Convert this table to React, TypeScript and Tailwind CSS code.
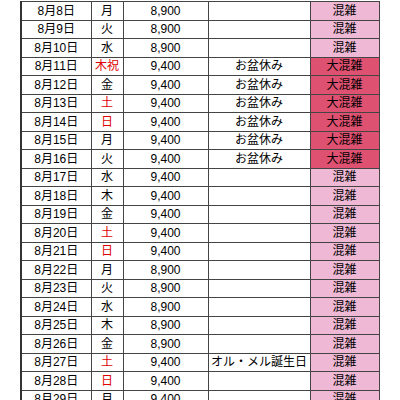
const rows: [string, string, boolean, string, string, "" | "mid" | "high"][] = [
  ["8月8日", "月", false, "8,900", "", "mid"],
  ["8月9日", "火", false, "8,900", "", "mid"],
  ["8月10日", "水", false, "8,900", "", "mid"],
  ["8月11日", "木祝", true, "9,400", "お盆休み", "high"],
  ["8月12日", "金", false, "9,400", "お盆休み", "high"],
  ["8月13日", "土", true, "9,400", "お盆休み", "high"],
  ["8月14日", "日", true, "9,400", "お盆休み", "high"],
  ["8月15日", "月", false, "9,400", "お盆休み", "high"],
  ["8月16日", "火", false, "9,400", "お盆休み", "high"],
  ["8月17日", "水", false, "9,400", "", "mid"],
  ["8月18日", "木", false, "9,400", "", "mid"],
  ["8月19日", "金", false, "9,400", "", "mid"],
  ["8月20日", "土", true, "9,400", "", "mid"],
  ["8月21日", "日", true, "9,400", "", "mid"],
  ["8月22日", "月", false, "8,900", "", "mid"],
  ["8月23日", "火", false, "8,900", "", "mid"],
  ["8月24日", "水", false, "8,900", "", "mid"],
  ["8月25日", "木", false, "8,900", "", "mid"],
  ["8月26日", "金", false, "8,900", "", "mid"],
  ["8月27日", "土", true, "9,400", "オル・メル誕生日", "mid"],
  ["8月28日", "日", true, "9,400", "", "mid"],
  ["8月29日", "月", false, "9,400", "", "mid"],
]

export default function App() {
  return (
    <div className="w-[400px] h-[400px] overflow-hidden bg-white pl-[20px] pt-[1px] font-['Liberation_Sans','Noto_Sans_CJK_JP',sans-serif] text-[12px] text-black">
      <table className="border-collapse table-fixed w-[358px] border-l-2 border-[#333]">
        <colgroup>
          <col className="w-[70px]" />
          <col className="w-[32px]" />
          <col className="w-[85px]" />
          <col className="w-[102px]" />
          <col className="w-[69px]" />
        </colgroup>
        <tbody>
          {rows.map(([date, day, red, price, note, crowd]) => (
            <tr key={date} className="h-[18.5px]">
              <td className="border border-[#444] text-center p-0 leading-none">{date}</td>
              <td className={`border border-[#444] text-center p-0 leading-none ${red ? "text-[#e00000]" : ""}`}>{day}</td>
              <td className="border border-[#444] text-center p-0 leading-none">{price}</td>
              <td className="border border-[#444] text-center p-0 leading-none">{note}</td>
              <td
                className={`border border-[#444] text-center p-0 leading-none ${
                  crowd === "high" ? "bg-[#df5170]" : "bg-[#efb9d5]"
                }`}
              >
                {crowd === "high" ? "大混雑" : "混雑"}
              </td>
            </tr>
          ))}
        </tbody>
      </table>
    </div>
  )
}
